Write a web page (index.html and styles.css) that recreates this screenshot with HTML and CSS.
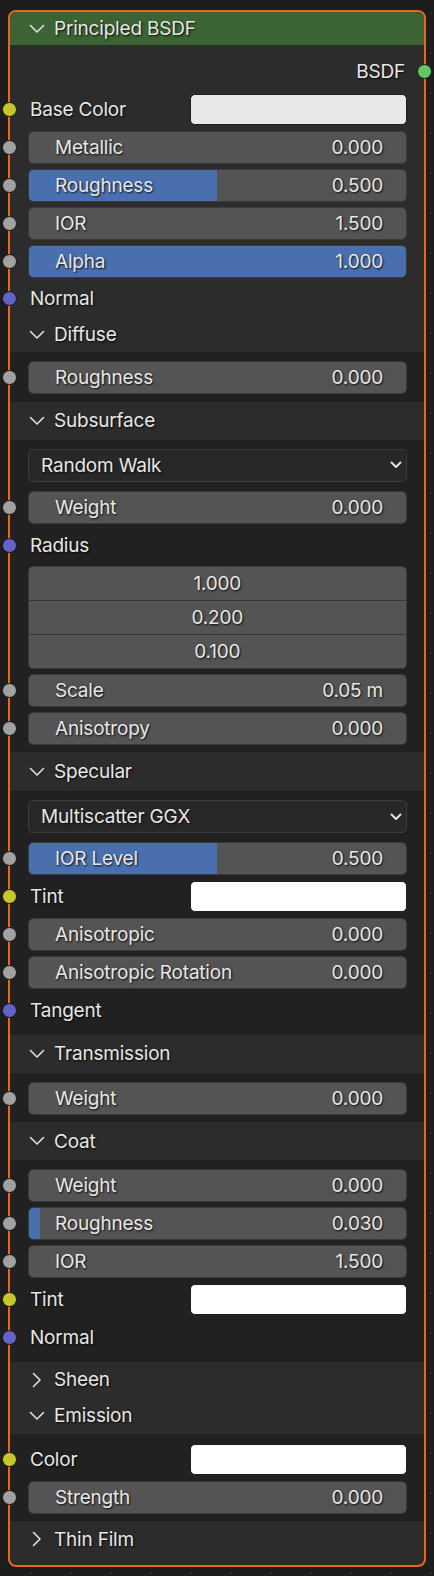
FILE: index.html
```html
<!DOCTYPE html>
<html>
<head>
<meta charset="utf-8">
<link rel="stylesheet" href="styles.css">
</head>
<body>
<div class="node">
  <div class="node-header">
    <svg class="chev" width="16" height="10" viewBox="0 0 16 10"><polyline points="1.5,1.5 8,8 14.5,1.5"/></svg>
    <span class="title">Principled BSDF</span>
  </div>

  <div class="main">
    <div class="row out"><span class="label">BSDF</span><span class="socket green sock-out"></span></div>
    <div class="row"><span class="socket yellow"></span><span class="label">Base Color</span><span class="swatch base"></span></div>
    <div class="row"><span class="socket gray"></span><div class="slider" style="--v:0%"><span>Metallic</span><span>0.000</span></div></div>
    <div class="row"><span class="socket gray"></span><div class="slider" style="--v:50%"><span>Roughness</span><span>0.500</span></div></div>
    <div class="row"><span class="socket gray"></span><div class="slider" style="--v:0%"><span>IOR</span><span>1.500</span></div></div>
    <div class="row"><span class="socket gray"></span><div class="slider" style="--v:100%"><span>Alpha</span><span>1.000</span></div></div>
    <div class="row short"><span class="socket purple"></span><span class="label">Normal</span></div>
  </div>

  <div class="panel-header first">
    <svg class="chev" width="16" height="10" viewBox="0 0 16 10"><polyline points="1.5,1.5 8,8 14.5,1.5"/></svg>
    <span>Diffuse</span>
  </div>
  <div class="panel">
    <div class="row"><span class="socket gray"></span><div class="slider" style="--v:0%"><span>Roughness</span><span>0.000</span></div></div>
  </div>

  <div class="panel-header">
    <svg class="chev" width="16" height="10" viewBox="0 0 16 10"><polyline points="1.5,1.5 8,8 14.5,1.5"/></svg>
    <span>Subsurface</span>
  </div>
  <div class="panel">
    <div class="row drop-row"><div class="dropdown"><span>Random Walk</span><svg class="drop-arrow" width="12" height="8" viewBox="0 0 12 8"><polyline points="1.5,1.5 6,6 10.5,1.5"/></svg></div></div>
    <div class="row"><span class="socket gray"></span><div class="slider" style="--v:0%"><span>Weight</span><span>0.000</span></div></div>
    <div class="row"><span class="socket purple"></span><span class="label">Radius</span></div>
    <div class="vector">
      <div class="vcell">1.000</div>
      <div class="vcell">0.200</div>
      <div class="vcell">0.100</div>
    </div>
    <div class="row"><span class="socket gray"></span><div class="slider" style="--v:0%"><span>Scale</span><span>0.05 m</span></div></div>
    <div class="row"><span class="socket gray"></span><div class="slider" style="--v:0%"><span>Anisotropy</span><span>0.000</span></div></div>
  </div>

  <div class="panel-header wide">
    <svg class="chev" width="16" height="10" viewBox="0 0 16 10"><polyline points="1.5,1.5 8,8 14.5,1.5"/></svg>
    <span>Specular</span>
  </div>
  <div class="panel">
    <div class="row drop-row"><div class="dropdown"><span>Multiscatter GGX</span><svg class="drop-arrow" width="12" height="8" viewBox="0 0 12 8"><polyline points="1.5,1.5 6,6 10.5,1.5"/></svg></div></div>
    <div class="row"><span class="socket gray"></span><div class="slider" style="--v:50%"><span>IOR Level</span><span>0.500</span></div></div>
    <div class="row"><span class="socket yellow"></span><span class="label">Tint</span><span class="swatch white"></span></div>
    <div class="row"><span class="socket gray"></span><div class="slider" style="--v:0%"><span>Anisotropic</span><span>0.000</span></div></div>
    <div class="row"><span class="socket gray"></span><div class="slider" style="--v:0%"><span>Anisotropic Rotation</span><span>0.000</span></div></div>
    <div class="row"><span class="socket purple"></span><span class="label">Tangent</span></div>
  </div>

  <div class="panel-header">
    <svg class="chev" width="16" height="10" viewBox="0 0 16 10"><polyline points="1.5,1.5 8,8 14.5,1.5"/></svg>
    <span>Transmission</span>
  </div>
  <div class="panel">
    <div class="row"><span class="socket gray"></span><div class="slider" style="--v:0%"><span>Weight</span><span>0.000</span></div></div>
  </div>

  <div class="panel-header">
    <svg class="chev" width="16" height="10" viewBox="0 0 16 10"><polyline points="1.5,1.5 8,8 14.5,1.5"/></svg>
    <span>Coat</span>
  </div>
  <div class="panel">
    <div class="row"><span class="socket gray"></span><div class="slider" style="--v:0%"><span>Weight</span><span>0.000</span></div></div>
    <div class="row"><span class="socket gray"></span><div class="slider" style="--v:3%"><span>Roughness</span><span>0.030</span></div></div>
    <div class="row"><span class="socket gray"></span><div class="slider" style="--v:0%"><span>IOR</span><span>1.500</span></div></div>
    <div class="row"><span class="socket yellow"></span><span class="label">Tint</span><span class="swatch white"></span></div>
    <div class="row"><span class="socket purple"></span><span class="label">Normal</span></div>
  </div>

  <div class="panel-header compact">
    <svg class="chev" width="16" height="16" viewBox="0 0 16 16"><polyline points="4.5,1.5 11,8 4.5,14.5"/></svg>
    <span>Sheen</span>
  </div>
  <div class="panel-header compact">
    <svg class="chev" width="16" height="10" viewBox="0 0 16 10"><polyline points="1.5,1.5 8,8 14.5,1.5"/></svg>
    <span>Emission</span>
  </div>
  <div class="panel">
    <div class="row"><span class="socket yellow"></span><span class="label">Color</span><span class="swatch white"></span></div>
    <div class="row"><span class="socket gray"></span><div class="slider" style="--v:0%"><span>Strength</span><span>0.000</span></div></div>
  </div>

  <div class="panel-header compact">
    <svg class="chev" width="16" height="16" viewBox="0 0 16 16"><polyline points="4.5,1.5 11,8 4.5,14.5"/></svg>
    <span>Thin Film</span>
  </div>
</div>
</body>
</html>
```

FILE: styles.css
```css
html, body {
  margin: 0;
  padding: 0;
}

body {
  background-color: #1d1d1d;
  background-image: radial-gradient(circle, #2f2f2f 1px, transparent 1.6px);
  background-size: 40px 40px;
  background-position: 411px -7px;
  font-family: Inter, "Noto Sans", "DejaVu Sans", sans-serif;
  font-size: 19px;
  letter-spacing: -0.2px;
  color: #e6e6e6;
  height: 1576px;
  overflow: hidden;
}

.node {
  margin: 10px 0 0 8px;
  width: 418px;
  box-sizing: border-box;
  border: 2px solid #e8661f;
  border-radius: 8px;
  background: #2c2c2c;
  padding-bottom: 8px;
  text-shadow: 1px 1px 2px rgba(0, 0, 0, 0.85);
}

.node-header {
  height: 33px;
  display: flex;
  align-items: center;
  padding-left: 19px;
  background: #3b6334;
  border-radius: 6px 6px 0 0;
}

.chev {
  flex: none;
  margin-right: 9px;
  fill: none;
  stroke: #dedede;
  stroke-width: 1.6;
  stroke-linecap: round;
  stroke-linejoin: round;
}

.main {
  padding-top: 7px;
}

.row {
  position: relative;
  height: 38px;
  display: flex;
  align-items: center;
  padding: 0 17.5px 0 18px;
}

.row.short {
  height: 37px;
}

.row.out {
  justify-content: flex-end;
  padding-right: 19px;
}

.label {
  margin-left: 2px;
}

.socket {
  position: absolute;
  left: -8.5px;
  top: 0;
  bottom: 0;
  margin: auto 0;
  width: 13px;
  height: 13px;
  box-sizing: content-box;
  border: 1px solid #161616;
  border-radius: 50%;
}

.socket.sock-out {
  left: auto;
  right: -8px;
}

.gray { background: #a1a1a1; }
.yellow { background: #c7c729; }
.purple { background: #6363c7; }
.green { background: #63c763; }

.swatch {
  margin-left: auto;
  width: 217px;
  height: 31px;
  box-sizing: border-box;
  border: 1px solid #1e1e1e;
  border-radius: 5px;
}

.swatch.base { background: #e8e8e8; }
.swatch.white { background: #ffffff; }

.slider {
  flex: 1;
  height: 33px;
  box-sizing: border-box;
  border: 1px solid #3a3a3a;
  border-radius: 5px;
  background: linear-gradient(to right, #4a6fae var(--v), #545454 var(--v));
  background-clip: padding-box;
  display: flex;
  align-items: center;
  justify-content: space-between;
  padding: 0 22.5px 0 26px;
  white-space: nowrap;
}

.panel-header {
  height: 38px;
  display: flex;
  align-items: center;
  padding-left: 19px;
}

.panel-header.first {
  height: 35px;
}

.panel-header.wide {
  height: 39px;
}

.panel-header.compact {
  height: 36px;
}

.panel {
  background: #212121;
  padding: 6.5px 0 5px;
}

.drop-row {
  margin-bottom: 4px;
}

.dropdown {
  flex: 1;
  height: 33px;
  box-sizing: border-box;
  background: #282828;
  border: 1px solid #3c3c3c;
  border-radius: 5px;
  display: flex;
  align-items: center;
  justify-content: space-between;
  padding: 0 4px 0 12px;
}

.drop-arrow {
  fill: none;
  stroke: #e0e0e0;
  stroke-width: 2;
  stroke-linecap: round;
  stroke-linejoin: round;
}

.vector {
  margin: 2px 17.5px 2px 18px;
  height: 103px;
  box-sizing: border-box;
  border: 1px solid #3a3a3a;
  border-radius: 5px;
  background: #363636;
  display: flex;
  flex-direction: column;
  gap: 1.5px;
  overflow: hidden;
}

.vcell {
  flex: 1;
  background: #545454;
  display: flex;
  align-items: center;
  justify-content: center;
}
```
